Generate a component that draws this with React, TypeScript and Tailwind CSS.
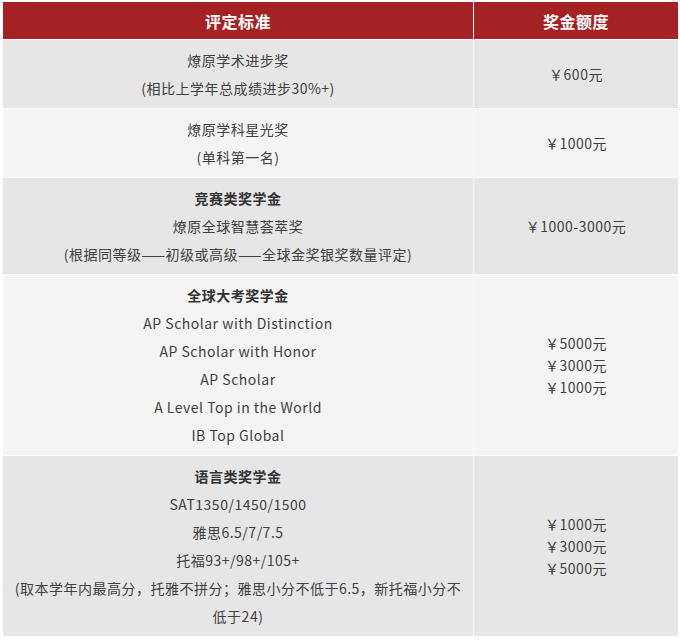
import React from "react";

type Row = {
  bg: string;
  title?: string;
  lines: string[];
  amounts: string[];
  h: string;
};

const rows: Row[] = [
  {
    bg: "bg-[#e6e6e6]",
    lines: ["燎原学术进步奖", "(相比上学年总成绩进步30%+)"],
    amounts: ["￥600元"],
    h: "h-[68px]",
  },
  {
    bg: "bg-[#f4f4f4]",
    lines: ["燎原学科星光奖", "(单科第一名)"],
    amounts: ["￥1000元"],
    h: "h-[68px]",
  },
  {
    bg: "bg-[#e6e6e6]",
    title: "竞赛类奖学金",
    lines: ["燎原全球智慧荟萃奖", "(根据同等级——初级或高级——全球金奖银奖数量评定)"],
    amounts: ["￥1000-3000元"],
    h: "h-[96px]",
  },
  {
    bg: "bg-[#f4f4f4]",
    title: "全球大考奖学金",
    lines: [
      "AP Scholar with Distinction",
      "AP Scholar with Honor",
      "AP Scholar",
      "A Level Top in the World",
      "IB Top Global",
    ],
    amounts: ["￥5000元", "￥3000元", "￥1000元"],
    h: "h-[180px]",
  },
  {
    bg: "bg-[#e6e6e6]",
    title: "语言类奖学金",
    lines: [
      "SAT1350/1450/1500",
      "雅思6.5/7/7.5",
      "托福93+/98+/105+",
      "(取本学年内最高分，托雅不拼分；雅思小分不低于6.5，新托福小分不",
      "低于24)",
    ],
    amounts: ["￥1000元", "￥3000元", "￥5000元"],
    h: "h-[180px]",
  },
];

export default function App() {
  return (
    <div
      className="min-h-screen bg-white pl-[2px] pt-[1px] tracking-[0.5px] text-[14px] text-[#404040]"
      style={{ fontFamily: '"Noto Sans CJK SC", "Noto Sans", sans-serif' }}
    >
      <div className="grid w-[677px] grid-cols-[470px_204px] gap-px bg-white p-px">
        {/* header */}
        <div className="flex h-[37px] items-center justify-center bg-[#a52224] text-[16px] font-bold text-white">
          评定标准
        </div>
        <div className="flex h-[37px] items-center justify-center bg-[#a52224] text-[16px] font-bold text-white">
          奖金额度
        </div>

        {rows.map((row, i) => (
          <React.Fragment key={i}>
            <div className={`${row.bg} ${row.h} flex flex-col items-center justify-center text-center leading-[28px]`}>
              {row.title && <div className="font-bold text-[#333]">{row.title}</div>}
              {row.lines.map((line, j) => (
                <div key={j} className="whitespace-nowrap">
                  {line}
                </div>
              ))}
            </div>
            <div className={`${row.bg} ${row.h} flex flex-col items-center justify-center leading-[22px]`}>
              {row.amounts.map((a, j) => (
                <div key={j}>{a}</div>
              ))}
            </div>
          </React.Fragment>
        ))}
      </div>
    </div>
  );
}
